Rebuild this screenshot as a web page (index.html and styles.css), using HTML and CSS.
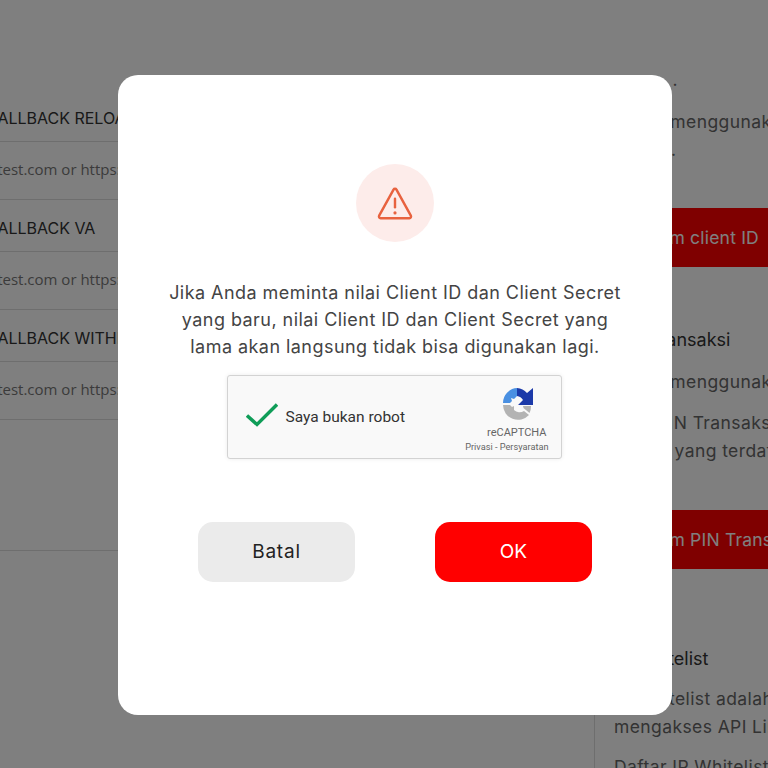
FILE: index.html
```html
<!DOCTYPE html>
<html lang="id">
<head>
<meta charset="utf-8">
<title>Pengaturan API</title>
<link rel="stylesheet" href="styles.css">
</head>
<body>
<div class="page">
  <main class="left">
    <section class="fields">
      <div class="field"><h3 class="field-title">CALLBACK RELOAD</h3><p class="field-text">https://test.com or https://test.com</p></div>
      <div class="field"><h3 class="field-title">CALLBACK VA</h3><p class="field-text">https://test.com or https://test.com</p></div>
      <div class="field"><h3 class="field-title">CALLBACK WITHDRAW</h3><p class="field-text">https://test.com or https://test.com</p></div>
    </section>
    <div class="left-lower"></div>
  </main>
  <aside class="right">
    <p class="copy">saran&nbsp;&nbsp;.</p>
    <p class="copy copy-a">Untuk menggunakan kunci<br><span class="tail">secret.</span></p>
    <div class="red-btn">Sistem client ID</div>
    <h4 class="side-title">PIN Transaksi</h4>
    <p class="copy copy-b">Untuk menggunakan PIN</p>
    <p class="copy copy-c">Nilai PIN Transaksi baru<br>nomor yang terdaftar</p>
    <div class="red-btn red-btn-2">Sistem PIN Transaksi</div>
    <h4 class="side-title side-title-3">IP Whitelist</h4>
    <p class="copy copy-d">IP Whitelist adalah daftar<br>mengakses API Link Qu</p>
    <p class="copy copy-e">Daftar IP Whitelist</p>
  </aside>
</div>
<div class="overlay">
  <div class="modal" role="dialog">
    <div class="alert-circle">
      <svg class="alert-icon" viewBox="0 0 36 36" fill="none" stroke="#e8623f" stroke-width="2.300" stroke-linecap="round" stroke-linejoin="round">
        <path d="M16.600 5.300a1.600 1.600 0 0 1 2.800 0L33 29.900a1.700 1.700 0 0 1-1.400 2.500H4.400A1.700 1.700 0 0 1 3 29.900Z"/>
        <path d="M18 14v8"/>
        <path d="M18 27.200v.2" stroke-width="3"/>
      </svg>
    </div>
    <p class="message">Jika Anda meminta nilai Client ID dan Client Secret yang baru, nilai Client ID dan Client Secret yang lama akan langsung tidak bisa digunakan lagi.</p>
    <div class="captcha">
      <svg class="check" viewBox="0 0 32 24" fill="none" stroke="#0f9d58" stroke-width="3.400"><path d="M1 12.500 11 21.500 31 1.500"/></svg>
      <span class="captcha-label">Saya bukan robot</span>
      <div class="captcha-brand">
        <svg class="captcha-logo" viewBox="0 0 34 34">
          <path d="M17 1A15 15 0 0 0 3 16H10L12 14 11 11 14 12 17 9Z" fill="#4a90e2"/>
          <path d="M17 1A15 15 0 0 1 27 6L33 1V18H18L23 13A8 8 0 0 0 17 9Z" fill="#1c3aa9"/>
          <path d="M3 18H10L12 20 14 19 14 23A8 8 0 0 0 24 24L29 28A15 15 0 0 1 3 18Z" fill="#b3b3b3"/>
          <path d="M23 19H31A15 15 0 0 1 29.500 26L23.500 21Z" fill="#b3b3b3"/>
        </svg>
        <span class="captcha-name">reCAPTCHA</span>
        <span class="captcha-links">Privasi - Persyaratan</span>
      </div>
    </div>
    <div class="actions">
      <button class="btn btn-cancel">Batal</button>
      <button class="btn btn-ok">OK</button>
    </div>
  </div>
</div>
</body>
</html>
```
FILE: styles.css
```css
* { box-sizing: border-box; }
html, body { margin: 0; padding: 0; height: 100%; overflow: hidden; background: #fff; }
body { font-family: Inter, "Liberation Sans", sans-serif; color: #333; }

.page { display: flex; width: 768px; height: 768px; overflow: hidden; }

.left { width: 595px; flex: none; overflow: hidden; }
.fields { height: 551px; padding-top: 90px; border-bottom: 1px solid #ddd; }
.field { border-bottom: 1px solid #ddd; height: 110px; }
.field-title { margin: 0 0 0 -14px; height: 52px; padding-top: 14px; font-size: 16px; font-weight: 400; line-height: 28px; color: #333; white-space: nowrap; border-bottom: 1px solid #ddd; }
.field-text { margin: 0 0 0 -54px; padding-top: 14px; font-family: "Open Sans", sans-serif; font-size: 15px; line-height: 27px; color: #777; white-space: nowrap; }
.left-lower { height: 217px; border-right: 1px solid #ddd; }

.right { flex: 1; min-width: 0; padding: 66px 0 0 19px; overflow: hidden; }
.copy { margin: 0; font-size: 17.500px; letter-spacing: 0.400px; line-height: 28px; color: #666; white-space: nowrap; }
.tail { letter-spacing: 0.900px; }
.copy-a { margin-top: 14px; }
.copy-b { margin-top: 14px; }
.copy-c { margin-top: 13px; }
.copy-d { margin-top: 12px; }
.copy-e { margin-top: 12px; }
.red-btn { height: 59px; margin-top: 44px; margin-left: -40px; width: 400px; padding-left: 54px; background: #f00; color: #fff; font-size: 17.500px; letter-spacing: 0.200px; line-height: 59px; white-space: nowrap; }
.red-btn-2 { margin-top: 45px; }
.side-title { margin: 59px 0 0; font-size: 18px; font-weight: 400; line-height: 28px; color: #333; white-space: nowrap; }
.side-title-3 { margin-top: 76px; }

.overlay { position: fixed; inset: 0; background: rgba(0, 0, 0, 0.5); display: flex; align-items: center; justify-content: center; }
.modal { width: 554px; height: 640px; margin: 22px 0 0 22px; background: #fff; border-radius: 20px; display: flex; flex-direction: column; align-items: center; padding-top: 89px; }

.alert-circle { width: 78px; height: 78px; border-radius: 50%; background: #fdecea; display: flex; align-items: center; justify-content: center; }
.alert-icon { width: 38px; height: 38px; }

.message { width: 460px; margin: 37px 0 0; font-size: 18px; letter-spacing: 0.450px; line-height: 27px; text-align: center; color: #444; }

.captcha { width: 335px; height: 84px; margin: 15px 2px 0 0; background: #f9f9f9; border: 1px solid #d3d3d3; border-radius: 3px; box-shadow: 0 0 4px rgba(0, 0, 0, 0.08); display: flex; align-items: center; padding: 0 12px 0 18px; }
.check { width: 32px; height: 24px; flex: none; margin-top: -4px; }
.captcha-label { margin-left: 8px; font-family: Roboto, sans-serif; font-size: 15.500px; color: #333; flex: 1; white-space: nowrap; }
.captcha-brand { display: flex; flex-direction: column; align-items: flex-end; flex: none; margin-top: 7px; }
.captcha-logo { width: 34px; height: 34px; margin: 0 15px 5px 0; }
.captcha-name { font-family: Roboto, sans-serif; font-size: 11px; line-height: 14px; color: #666; padding-right: 2px; }
.captcha-links { font-family: Roboto, sans-serif; font-size: 9.200px; line-height: 14px; color: #666; white-space: nowrap; }

.actions { display: flex; gap: 80px; margin-top: 63px; }
.btn { width: 157px; height: 60px; border: 0; border-radius: 15px; padding: 0 0 2px; font-family: inherit; font-size: 19px; cursor: pointer; }
.btn-cancel { background: #ebebeb; color: #222; letter-spacing: 0.800px; }
.btn-ok { background: #f00; color: #fff; }
```
